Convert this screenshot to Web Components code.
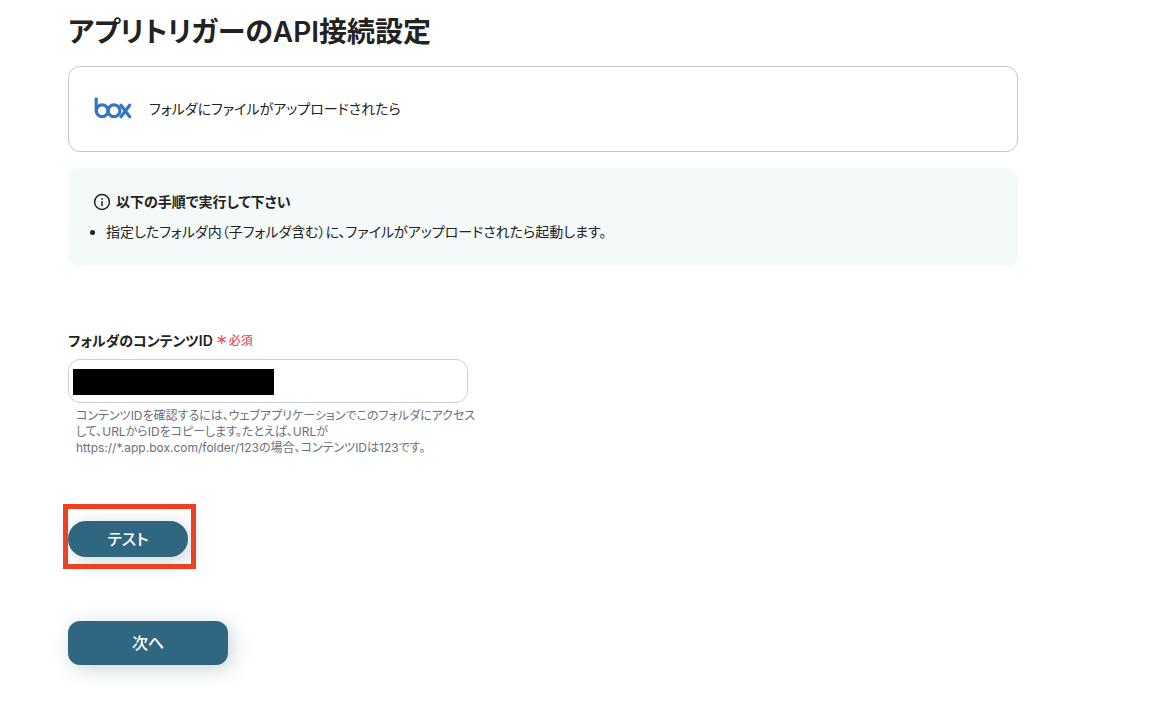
<!DOCTYPE html>
<html lang="ja">
<head>
<meta charset="utf-8">
<meta name="viewport" content="width=device-width, initial-scale=1">
<title>アプリトリガーのAPI接続設定</title>
<style>
  body {
    margin: 0;
    background: #fff;
    color: #222;
    font-family: Inter, "Noto Sans CJK JP", sans-serif;
    font-size: 14px;
    line-height: 20px;
    font-feature-settings: "palt";
  }
</style>
</head>
<body>
<trigger-page></trigger-page>
<script>
const define = (name, html) => {
  const template = document.createElement('template');
  template.innerHTML = html;
  customElements.define(name, class extends HTMLElement {
    constructor() {
      super();
      this.attachShadow({ mode: 'open' }).append(template.content.cloneNode(true));
    }
  });
};

define('box-logo', `
  <style>
    :host { display: block; flex: none; width: 40px; height: 24px; }
    svg { display: block; }
  </style>
  <svg width="40" height="24" viewBox="0 0 40 24" fill="none" stroke="#3575c4" stroke-width="3.2" stroke-linecap="round" stroke-linejoin="round" role="img" aria-label="box">
    <path d="M3.2 1.8V13.8"/>
    <circle cx="9.2" cy="13.8" r="5.9"/>
    <circle cx="21" cy="13.8" r="5.9"/>
    <path d="M28 8.2L36.7 19.7M36.7 8.2L28 19.7"/>
  </svg>`);

define('app-card', `
  <style>
    :host { display: flex; align-items: center; gap: 16px; box-sizing: border-box; min-height: 86px; padding: 24px; border: 1px solid #c4c7c9; border-radius: 12px; background: #fff; }
  </style>
  <box-logo></box-logo><span><slot></slot></span>`);

define('info-panel', `
  <style>
    :host { display: block; padding: 24px; border-radius: 12px; background: #f4f9f9; }
    h2 { display: flex; align-items: center; gap: 4px; margin: 0; font-size: 14px; font-weight: 600; line-height: 20px; }
    svg { flex: none; }
    ul { margin: 10px 0 0; padding: 0 0 0 14px; }
  </style>
  <h2>
    <svg width="20" height="20" viewBox="0 0 20 20" fill="none" stroke="#222" stroke-width="1.5" aria-hidden="true">
      <circle cx="10" cy="10" r="7.4"/>
      <path d="M10 9.2V14"/>
      <circle cx="10" cy="6.9" r=".9" fill="#222" stroke="none"/>
    </svg>
    <slot name="title"></slot>
  </h2>
  <ul><li><slot></slot></li></ul>`);

define('content-field', `
  <style>
    :host { display: block; max-width: 400px; }
    label { display: flex; align-items: center; gap: 4px; font-weight: 600; line-height: 20px; }
    .required { display: flex; align-items: center; gap: 2px; color: #ea5460; font-size: 12px; font-weight: 500; }
    b { font-weight: 900; }
    .box { position: relative; margin: 8px 0 5px; }
    input { display: block; box-sizing: border-box; width: 100%; height: 44px; padding: 0 12px; border: 1px solid #cbd0d6; border-radius: 12px; background: #fff; color: #222; font: inherit; outline: 0; }
    .mask { position: absolute; left: 5px; top: 10px; width: 201px; height: 26px; background: #000; }
    p { margin: 0 -8px 0 0; padding-left: 8px; color: #68707a; font-size: 12px; line-height: 16px; }
  </style>
  <label for="content-id">フォルダのコンテンツID<span class="required"><b>＊</b>必須</span></label>
  <div class="box"><input id="content-id" type="text" required aria-describedby="help"><span class="mask"></span></div>
  <p id="help"><slot></slot></p>`);

define('action-button', `
  <style>
    :host { display: block; position: relative; width: 160px; }
    button { display: block; width: 100%; height: 44px; padding: 0; border: 0; border-radius: 12px; background: #2f6680; box-shadow: 4px 4px 20px rgba(30, 60, 80, .22); color: #fff; font: 500 16px/24px Inter, "Noto Sans CJK JP", sans-serif; font-feature-settings: inherit; cursor: pointer; }
    :host([pill]) { width: 120px; }
    :host([pill]) button { height: 36px; border-radius: 18px; }
    :host([highlighted])::after { content: ""; position: absolute; inset: -17px -8px -12px -5px; border: 5px solid #ee4023; pointer-events: none; }
  </style>
  <button type="button"><slot></slot></button>`);

define('trigger-page', `
  <style>
    :host { display: block; padding: 12px 24px 48px 68px; }
    main { display: flex; flex-direction: column; max-width: 950px; }
    h1 { margin: 0 0 14px; font-size: 28px; font-weight: 600; line-height: 40px; }
    info-panel { margin-top: 16px; }
    content-field { margin-top: 65px; }
    .url { white-space: nowrap; }
    .test { margin-top: 65px; }
    .next { margin-top: 64px; }
  </style>
  <main>
    <h1>アプリトリガーのAPI接続設定</h1>
    <app-card>フォルダにファイルがアップロードされたら</app-card>
    <info-panel><span slot="title">以下の手順で実行して下さい</span>指定したフォルダ内（子フォルダ含む）に、ファイルがアップロードされたら起動します。</info-panel>
    <content-field>コンテンツIDを確認するには、ウェブアプリケーションでこのフォルダにアクセスして、URLからIDをコピーします。たとえば、URLが<span class="url">https://*.app.box.com/folder/123</span>の場合、コンテンツIDは123です。</content-field>
    <action-button class="test" pill highlighted>テスト</action-button>
    <action-button class="next">次へ</action-button>
  </main>`);
</script>
</body>
</html>
